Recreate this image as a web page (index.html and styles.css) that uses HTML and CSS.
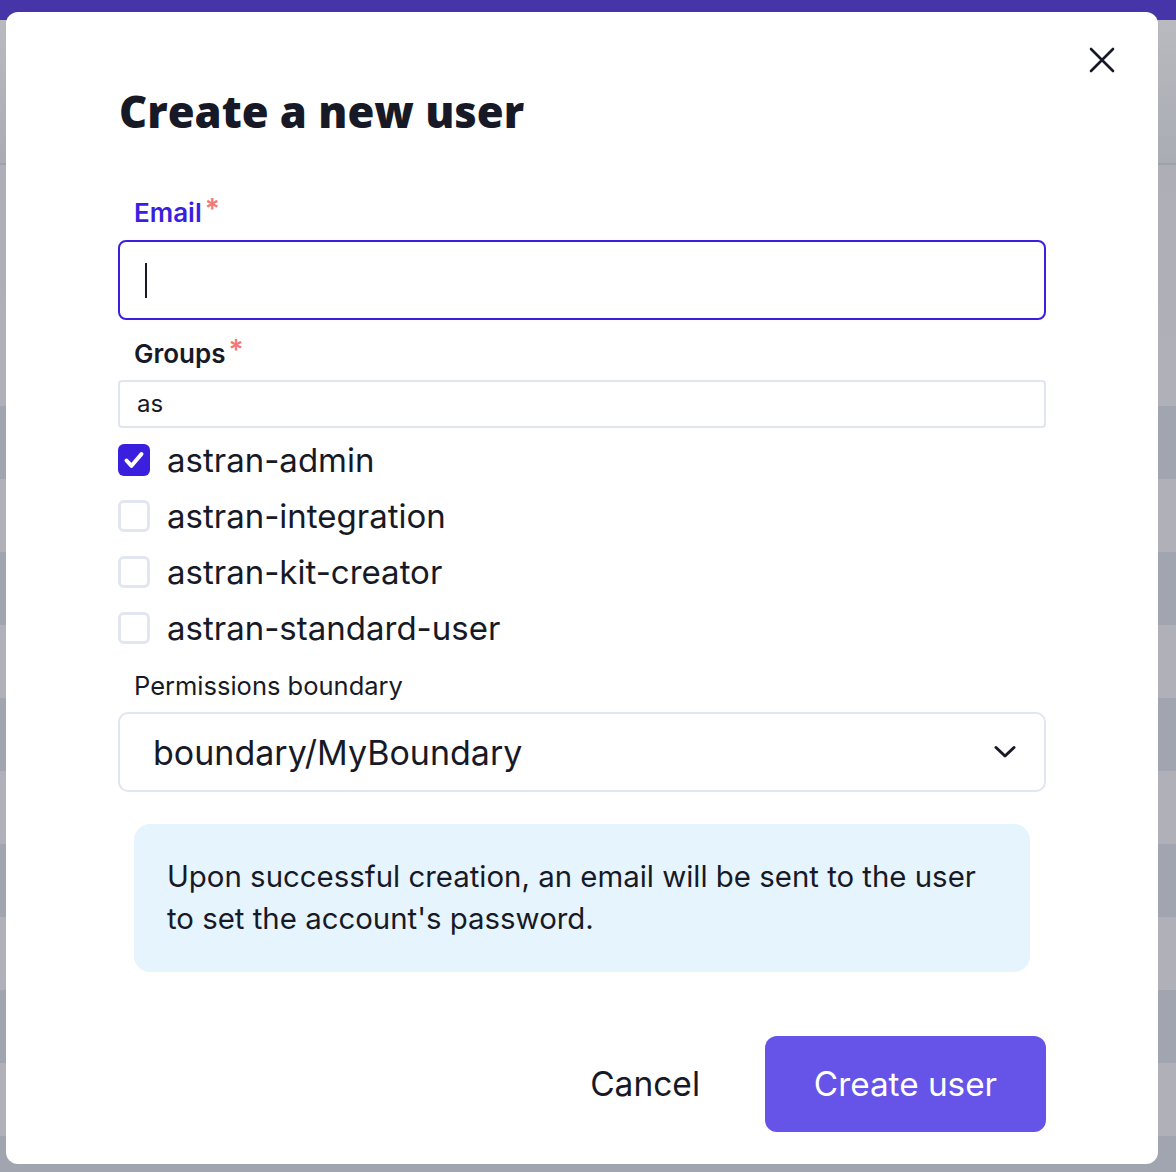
FILE: index.html
```html
<!DOCTYPE html>
<html lang="en">
<head>
<meta charset="utf-8">
<title>Create a new user</title>
<link rel="stylesheet" href="styles.css">
</head>
<body>
<div class="app">
  <div class="topbar"></div>
  <div class="hero"></div>
  <div class="rows">
    <div class="row light tall"></div>
    <div class="row dark"></div>
    <div class="row light"></div>
    <div class="row dark"></div>
    <div class="row light"></div>
    <div class="row dark"></div>
    <div class="row light"></div>
    <div class="row dark"></div>
    <div class="row light"></div>
    <div class="row dark"></div>
    <div class="row light"></div>
    <div class="row dark"></div>
  </div>
</div>

<div class="modal" role="dialog" aria-labelledby="dlg-title">
  <button class="close" aria-label="Close">
    <svg width="28" height="28" viewBox="0 0 28 28"><path d="M3 3 L25 25 M25 3 L3 25" stroke="#171a26" stroke-width="2.6" stroke-linecap="round" fill="none"/></svg>
  </button>
  <h1 class="title" id="dlg-title">Create a new user</h1>

  <label class="label label-active">Email<span class="req">*</span></label>
  <div class="input input-focus"><span class="caret"></span></div>

  <label class="label">Groups<span class="req">*</span></label>
  <div class="search">as</div>

  <ul class="checks">
    <li class="check-item"><span class="box checked"><svg width="32" height="32" viewBox="0 0 32 32"><path d="M8.5 16.5 L13.5 21.8 L23.5 10" stroke="#fff" stroke-width="4" stroke-linecap="round" stroke-linejoin="round" fill="none"/></svg></span>astran-admin</li>
    <li class="check-item"><span class="box"></span>astran-integration</li>
    <li class="check-item"><span class="box"></span>astran-kit-creator</li>
    <li class="check-item"><span class="box"></span>astran-standard-user</li>
  </ul>

  <label class="label label-plain">Permissions boundary</label>
  <div class="select">
    <span>boundary/MyBoundary</span>
    <svg width="22" height="14" viewBox="0 0 22 14"><path d="M2 2.5 L11 11 L20 2.5" stroke="#171a26" stroke-width="3" stroke-linecap="round" stroke-linejoin="round" fill="none"/></svg>
  </div>

  <div class="info">Upon successful creation, an email will be sent to the user<br>to set the account's password.</div>

  <div class="footer">
    <button class="btn-cancel">Cancel</button>
    <button class="btn-primary">Create user</button>
  </div>
</div>
</body>
</html>
```
FILE: styles.css
```css
* { box-sizing: border-box; }
html, body { margin: 0; padding: 0; }
body {
  width: 1176px;
  height: 1172px;
  overflow: hidden;
  background: #9c9ea8;
  font-family: "Inter", "DejaVu Sans", sans-serif;
  color: #171a26;
  position: relative;
}
.app { display: flex; flex-direction: column; }
.topbar { height: 20px; background: #4535a9; }
.hero {
  height: 145px;
  background: linear-gradient(#b9babf, #aaacb4);
  border-bottom: 2px solid #9ca1ad;
}
.rows { display: flex; flex-direction: column; }
.row { height: 73px; }
.row.tall { height: 241px; }
.row.light { background: #b0b1b8; }
.row.dark { background: #a1a5b0; }
.row.tall.light { background: linear-gradient(#aeafb6, #b0b1b8); }

.modal {
  position: absolute;
  left: 6px;
  top: 12px;
  width: 1152px;
  height: 1152px;
  background: #fff;
  border-radius: 12px;
  padding: 72px 112px 32px;
  display: flex;
  flex-direction: column;
}
.close {
  position: absolute;
  top: 34px;
  right: 42px;
  width: 28px;
  height: 28px;
  padding: 0;
  border: 0;
  background: none;
  display: flex;
}
.title {
  margin: 0 0 0 1px;
  height: 56px;
  font-family: "Open Sans", sans-serif;
  font-weight: 800;
  font-size: 43.5px;
  line-height: 56px;
  color: #171a26;
}
.label {
  display: block;
  height: 32px;
  line-height: 32px;
  font-size: 26px;
  font-weight: 600;
  padding-left: 16px;
  margin-top: 18px;
  margin-bottom: 10px;
}
.title + .label { margin-top: 57px; margin-bottom: 11px; }
.label-active { color: #3a1fdf; }
.label-plain { font-weight: 400; font-size: 25.5px; margin-top: 14px; }
.req {
  color: #f47878;
  font-size: 28px;
  line-height: 0;
  vertical-align: 3px;
  margin-left: 3px;
}
.input {
  height: 80px;
  border-radius: 8px;
  border: 2px solid #dfe3ec;
  display: flex;
  align-items: center;
  padding-left: 25px;
}
.input-focus { border-color: #3a1fdf; }
.caret { width: 2px; height: 35px; background: #171a26; }
.search {
  height: 48px;
  border: 2px solid #e1e5ee;
  border-radius: 4px;
  padding-left: 17px;
  font-size: 24px;
  line-height: 44px;
}
.checks { list-style: none; margin: 4px 0 0; padding: 0; }
.check-item {
  height: 56px;
  display: flex;
  align-items: center;
  font-size: 33px;
  gap: 17px;
}
.box {
  width: 32px;
  height: 32px;
  border-radius: 6px;
  border: 3px solid #e1e6f0;
  background: #fff;
  flex: none;
  display: flex;
}
.box.checked { background: #3a1fdf; border: 0; }
.select {
  height: 80px;
  border: 2px solid #e1e5ee;
  border-radius: 10px;
  padding: 0 28px 0 33px;
  display: flex;
  align-items: center;
  justify-content: space-between;
  font-size: 34px;
}
.info {
  margin: 32px 16px 0;
  height: 148px;
  background: #e6f4fe;
  border-radius: 16px;
  padding: 32px 33px;
  font-size: 29.4px;
  line-height: 42px;
}
.footer {
  margin-top: 64px;
  display: flex;
  justify-content: flex-end;
  align-items: center;
  gap: 33px;
}
.footer button { font-family: inherit; cursor: pointer; }
.btn-cancel {
  background: none;
  border: 0;
  font-size: 33.5px;
  color: #171a26;
  padding: 0 32px;
  height: 96px;
}
.btn-primary {
  width: 281px;
  height: 96px;
  border: 0;
  border-radius: 12px;
  background: #6653e8;
  color: #fff;
  font-size: 33.3px;
}
```
